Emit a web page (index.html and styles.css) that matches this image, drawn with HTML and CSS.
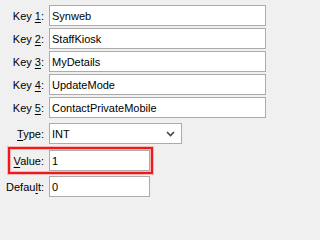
FILE: index.html
```html
<!DOCTYPE html>
<html>
<head>
<meta charset="utf-8">
<link rel="stylesheet" href="styles.css">
</head>
<body>
<div class="form">
  <div class="row key">
    <label class="lbl">Key <u>1</u>:</label>
    <div class="field wide">Synweb</div>
  </div>
  <div class="row key">
    <label class="lbl">Key <u>2</u>:</label>
    <div class="field wide">StaffKiosk</div>
  </div>
  <div class="row key">
    <label class="lbl">Key <u>3</u>:</label>
    <div class="field wide">MyDetails</div>
  </div>
  <div class="row key">
    <label class="lbl">Key <u>4</u>:</label>
    <div class="field wide">UpdateMode</div>
  </div>
  <div class="row key">
    <label class="lbl">Key <u>5</u>:</label>
    <div class="field wide">ContactPrivateMobile</div>
  </div>
  <div class="row type">
    <label class="lbl"><u>T</u>ype:</label>
    <div class="field combo">
      <span class="combo-text">INT</span>
      <svg class="chev" width="9" height="6" viewBox="0 0 9 6"><path d="M1 1 L4.5 4.5 L8 1" fill="none" stroke="#444" stroke-width="1.6"/></svg>
    </div>
  </div>
  <div class="row value">
    <div class="highlight"></div>
    <label class="lbl"><u>V</u>alue:</label>
    <div class="field short">1</div>
  </div>
  <div class="row default">
    <label class="lbl">Defau<u>l</u>t:</label>
    <div class="field short">0</div>
  </div>
</div>
</body>
</html>
```

FILE: styles.css
```css
html, body {
  margin: 0;
  padding: 0;
  background: #f0f0f0;
}
body {
  width: 271px;
  height: 202px;
  overflow: hidden;
  font-family: "Liberation Sans", Arial, sans-serif;
  font-size: 11px;
  color: #000;
}
.form {
  padding-top: 5px;
  display: flex;
  flex-direction: column;
}
.row {
  display: flex;
  align-items: center;
  height: 21px;
  position: relative;
}
.row.key { margin-bottom: 2px; }
.row.type { margin-top: 3px; }
.row.value { margin-top: 6px; }
.row.default { margin-top: 5px; }
.lbl {
  width: 44px;
  text-align: right;
  margin-right: 5px;
  white-space: nowrap;
  position: relative;
  z-index: 1;
}
.lbl u { text-decoration-thickness: 1px; text-underline-offset: 2px; }
.field {
  box-sizing: border-box;
  height: 21px;
  border: 1px solid #ababab;
  background: #fff;
  padding: 0 3px 0 2px;
  display: flex;
  align-items: center;
  white-space: nowrap;
  position: relative;
  z-index: 1;
}
.wide { width: 217px; }
.combo {
  width: 133px;
  justify-content: space-between;
  padding-right: 6px;
}
.short { width: 101px; }
.chev { display: block; }
.highlight {
  position: absolute;
  left: 8px;
  top: -3px;
  width: 145px;
  height: 27px;
  box-sizing: border-box;
  border: 2px solid #f01818;
  box-shadow: 0 0 0 1px rgba(255, 80, 80, 0.35), inset 0 0 0 1px rgba(255, 80, 80, 0.35);
}
```
